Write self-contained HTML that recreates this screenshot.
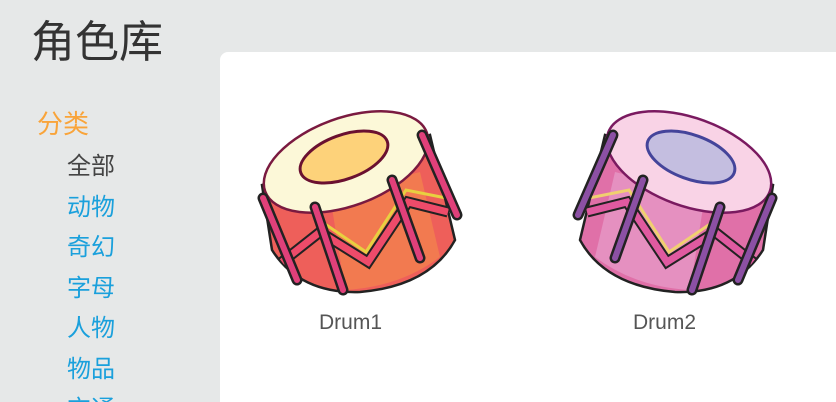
<!DOCTYPE html>
<html><head><meta charset="utf-8"><style>
html,body{margin:0;width:836px;height:402px;overflow:hidden}
body{background:#e6e8e8;position:relative;font-family:"Liberation Sans","Noto Sans CJK SC",sans-serif}
.t{position:absolute;left:31px;top:15px;font-size:44px;color:#333;line-height:56px}
.c{position:absolute;left:37px;top:108px;font-size:26px;color:#f9a43a;line-height:32px}
.i{position:absolute;left:67px;font-size:24px;color:#1aa0dc;line-height:30px}
.p{position:absolute;left:220px;top:52px;width:616px;height:350px;background:#fff;border-top-left-radius:8px}
.l{position:absolute;top:311px;font-size:21px;color:#555;font-family:"Liberation Sans",sans-serif}
</style></head><body>
<div class="t">角色库</div>
<div class="c">分类</div>
<div class="i" style="top:152px;color:#444">全部</div>
<div class="i" style="top:193px">动物</div>
<div class="i" style="top:233px">奇幻</div>
<div class="i" style="top:274px">字母</div>
<div class="i" style="top:314px">人物</div>
<div class="i" style="top:355px">物品</div>
<div class="i" style="top:395px">交通</div>
<div class="p"></div>
<svg width="836" height="402" style="position:absolute;left:0;top:0">
<g>
<path d="M262,185 L272,250 Q300,294 360,292 Q430,286 455,240 L430,135 Z" fill="#ee5f5a" stroke="#222" stroke-width="2.5"/>
<path d="M330,195 L345,290 Q400,287 440,257 L420,172 Z" fill="#f27a50"/>
<ellipse cx="346" cy="162" rx="86" ry="44" transform="rotate(-20 346 162)" fill="#fcf8d8" stroke="#7a1a40" stroke-width="2.5"/>
<ellipse cx="344" cy="157" rx="46" ry="22" transform="rotate(-20 344 157)" fill="#fdd27a" stroke="#6a1030" stroke-width="3"/>
<polyline points="282,262 320,232 368,262 408,202 448,212" fill="none" stroke="#222" stroke-width="11"/>
<polyline points="282,262 320,232 368,262 408,202 448,212" fill="none" stroke="#ee4b6a" stroke-width="7"/>
<polyline points="322,222 366,252 406,190 446,198" fill="none" stroke="#e8d040" stroke-width="3"/>
<g stroke="#222" stroke-width="11" stroke-linecap="round">
<line x1="263" y1="198" x2="297" y2="280"/><line x1="315" y1="207" x2="343" y2="290"/>
<line x1="392" y1="180" x2="420" y2="258"/><line x1="422" y1="135" x2="457" y2="215"/></g>
<g stroke="#e0407a" stroke-width="6" stroke-linecap="round">
<line x1="263" y1="198" x2="297" y2="280"/><line x1="315" y1="207" x2="343" y2="290"/>
<line x1="392" y1="180" x2="420" y2="258"/><line x1="422" y1="135" x2="457" y2="215"/></g>
</g>
<g transform="translate(1035,0) scale(-1,1)">
<path d="M262,185 L272,250 Q300,294 360,292 Q430,286 455,240 L430,135 Z" fill="#e070a8" stroke="#222" stroke-width="2.5"/>
<path d="M330,195 L345,290 Q400,287 440,257 L420,172 Z" fill="#e590c0"/>
<ellipse cx="346" cy="162" rx="86" ry="44" transform="rotate(-20 346 162)" fill="#f9d3e6" stroke="#7a1a60" stroke-width="2.5"/>
<ellipse cx="344" cy="157" rx="46" ry="22" transform="rotate(-20 344 157)" fill="#c4bee0" stroke="#44449a" stroke-width="3"/>
<polyline points="282,262 320,232 368,262 408,202 448,212" fill="none" stroke="#222" stroke-width="11"/>
<polyline points="282,262 320,232 368,262 408,202 448,212" fill="none" stroke="#e05aa0" stroke-width="7"/>
<polyline points="322,222 366,252 406,190 446,198" fill="none" stroke="#f0d070" stroke-width="3"/>
<g stroke="#222" stroke-width="11" stroke-linecap="round">
<line x1="263" y1="198" x2="297" y2="280"/><line x1="315" y1="207" x2="343" y2="290"/>
<line x1="392" y1="180" x2="420" y2="258"/><line x1="422" y1="135" x2="457" y2="215"/></g>
<g stroke="#8c50a4" stroke-width="6" stroke-linecap="round">
<line x1="263" y1="198" x2="297" y2="280"/><line x1="315" y1="207" x2="343" y2="290"/>
<line x1="392" y1="180" x2="420" y2="258"/><line x1="422" y1="135" x2="457" y2="215"/></g>
</g>
</svg>
<div class="l" style="left:319px">Drum1</div>
<div class="l" style="left:633px">Drum2</div>
</body></html>
